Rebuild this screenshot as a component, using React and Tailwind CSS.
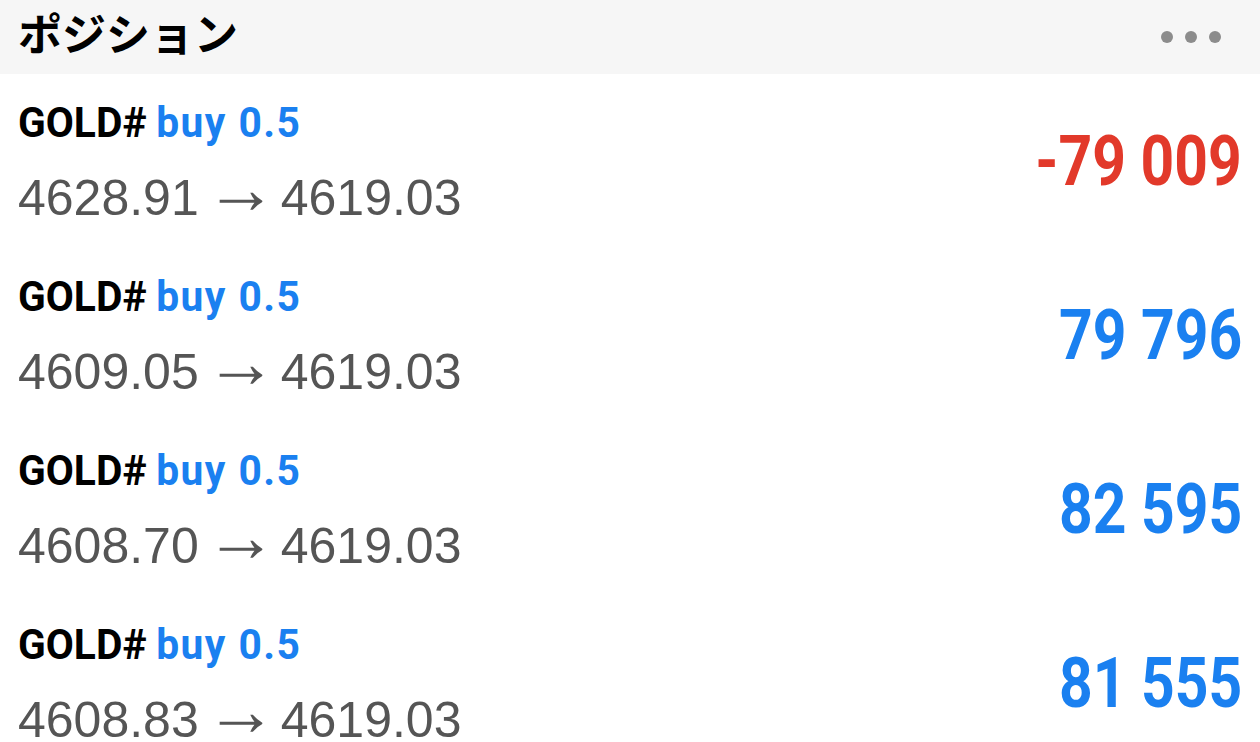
import React from 'react';

const positions = [
  { open: '4628.91', close: '4619.03', profit: '-79 009' },
  { open: '4609.05', close: '4619.03', profit: '79 796' },
  { open: '4608.70', close: '4619.03', profit: '82 595' },
  { open: '4608.83', close: '4619.03', profit: '81 555' },
];

export default function App() {
  return (
    <div className="w-[1260px] h-[742px] overflow-hidden bg-white">
      {/* ヘッダー */}
      <div className="h-[74px] bg-[#f6f6f6] flex items-center justify-between pl-[18px] pr-[39px]">
        <h1 className="text-[44px] font-bold text-black leading-none mb-[10px]" style={{ fontFamily: '"Noto Sans CJK JP", sans-serif' }}>
          ポジション
        </h1>
        <div className="flex gap-[12px]">
          <span className="w-[12px] h-[12px] rounded-full bg-[#8c8c8c]" />
          <span className="w-[12px] h-[12px] rounded-full bg-[#8c8c8c]" />
          <span className="w-[12px] h-[12px] rounded-full bg-[#8c8c8c]" />
        </div>
      </div>

      {/* ポジション一覧 */}
      {positions.map((p, i) => (
        <div key={i} className="h-[174px] flex items-center justify-between pl-[18px] pr-[18px]">
          <div className="flex flex-col">
            <div className="h-[70px] flex items-center font-bold text-[42px] font-['Roboto',sans-serif] origin-left scale-x-[0.97] whitespace-nowrap">
              <span className="text-black">GOLD#</span>
              <span className="text-[#1a80f0] ml-[10px] tracking-[1.5px]">buy 0.5</span>
            </div>
            <div className="h-[77px] leading-[77px] pt-[2px] text-[50px] text-[#555555] font-['Liberation_Sans',sans-serif] whitespace-nowrap">
              {p.open}
              <span className="text-[72px] leading-[0] align-[2px] ml-[6px] mr-[4px]">→</span>
              {p.close}
            </div>
          </div>
          <div
            className={`text-[70px] font-bold font-['Roboto',sans-serif] leading-none origin-right scale-x-[0.84] whitespace-nowrap ${p.profit.startsWith('-') ? 'text-[#e2392a]' : 'text-[#1a80f0]'}`}
          >
            {p.profit}
          </div>
        </div>
      ))}
    </div>
  );
}
